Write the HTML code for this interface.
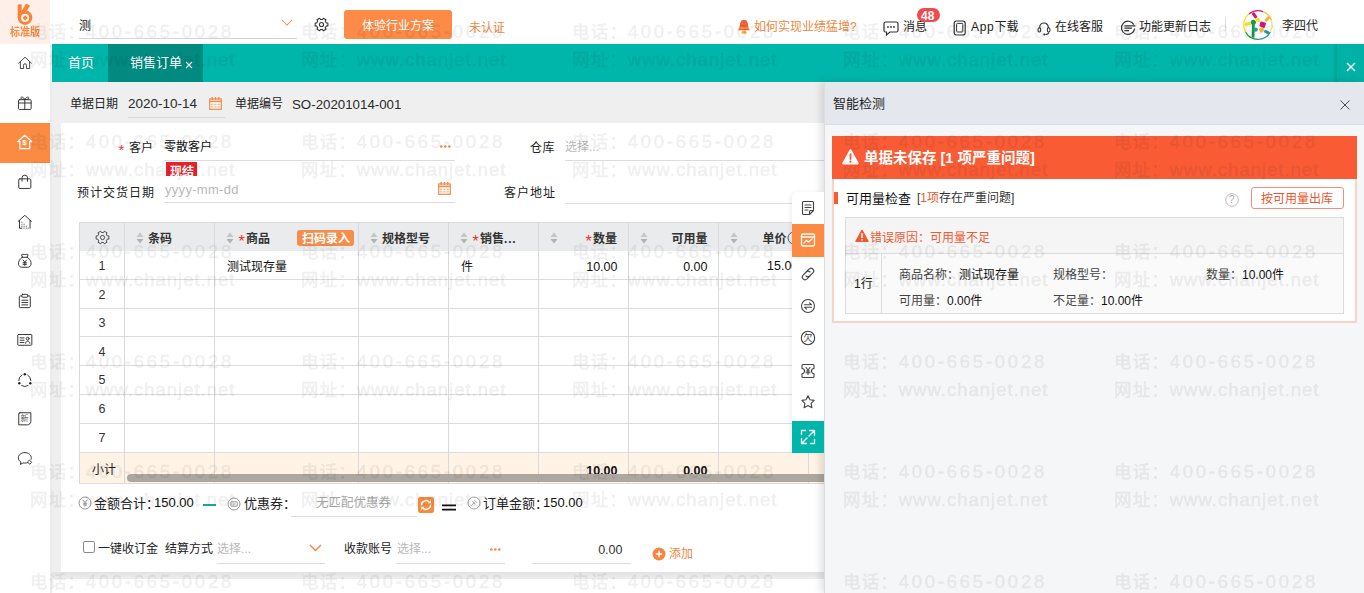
<!DOCTYPE html>
<html lang="zh-CN">
<head>
<meta charset="utf-8">
<title>销售订单</title>
<style>
*{box-sizing:border-box;margin:0;padding:0}
html,body{width:1364px;height:593px;overflow:hidden}
body{position:relative;background:#efefef;font-family:"Liberation Sans","Noto Sans CJK SC",sans-serif;font-size:12px;color:#222;-webkit-font-smoothing:antialiased}
.abs{position:absolute}
.t{position:absolute;white-space:nowrap;line-height:1}
svg{position:absolute;overflow:visible}
.ln{position:absolute;height:1px;background:#dcdcdc}
.ph{color:#b9b9b9}
.or{color:#f5853f}
/* sidebar */
#side{left:0;top:0;width:50px;height:593px;background:#fff}
#sideb{left:50px;top:44px;width:2px;height:549px;background:#ebebeb}
#logo{left:0;top:0;width:50px;height:44px;background:#fef0e8}
#sact{left:0;top:123px;width:50px;height:40px;background:#fb8b42}
/* top */
#top{left:50px;top:0;width:1314px;height:44px;background:#fff}
#tabs{left:52px;top:44px;width:1312px;height:38px;background:#00b5a9}
#tabact{left:56px;top:0;width:95px;height:38px;background:#008a80}
#tabx{left:1285px;top:0;width:27px;height:38px;background:#00b1a5;box-shadow:-2px 0 3px rgba(0,0,0,.12)}
/* form */
#form{left:61px;top:123px;width:770px;height:449px;background:#fff}
#bot{left:52px;top:579px;width:1312px;height:14px;background:#fff}
#botsh{left:52px;top:572px;width:780px;height:7px;background:linear-gradient(#e2e2e2,#ededed)}
/* table */
#th{left:79px;top:222px;width:750px;height:29px;background:#e9ebec}
.vl{position:absolute;width:1px;background:#d9d9d9;top:222px;height:261px}
.hl{position:absolute;height:1px;background:#dcdcdc;left:79px;width:750px}
.hd{font-weight:bold;font-size:12px;color:#333}
.star{color:#f0311f;font-weight:bold}
/* panel */
#panel{left:824px;top:82px;width:540px;height:511px;background:#f5f6f8;box-shadow:-3px 0 8px rgba(0,0,0,.13);border-left:1px solid #dcdde0}
#phead{left:0;top:0;width:540px;height:43px;background:#e4e7ed;border-bottom:1px solid #d9dce2}
#card{left:832px;top:136px;width:525px;height:187px;background:#fff;border:2px solid #fad2c8}
#redbar{left:832px;top:136px;width:525px;height:43px;background:#f95b35}
#itab{left:845px;top:217px;width:499px;height:97px;background:#fafafa;border:1px solid #dcdcdc}
#ihead{left:845px;top:217px;width:499px;height:37px;background:#f5f5f5;border:1px solid #dcdcdc}
/* toolbar */
#tool{left:792px;top:192px;width:32px;height:261px;background:#fff;border-radius:6px 0 0 0;box-shadow:-2px 0 4px rgba(0,0,0,.06)}
/* watermark */
#wm{left:1.6px;top:0;width:1364px;height:597px;pointer-events:none;overflow:hidden;opacity:.06;filter:blur(.6px)}
.w{position:absolute;white-space:nowrap;font-size:17.5px;line-height:20px;color:#000;letter-spacing:1.05px;-webkit-text-stroke:.65px #000}
.w .n{font-size:18.5px;letter-spacing:2.75px}
.w .u{font-size:18.5px;letter-spacing:1px}
</style>
</head>
<body>
<!-- BASE -->
<div id="top" class="abs"></div>
<div id="side" class="abs"></div>
<div id="sideb" class="abs"></div>
<div id="logo" class="abs"></div>
<div id="sact" class="abs"></div>
<div id="tabs" class="abs">
  <div id="tabact" class="abs"></div>
  <div id="tabx" class="abs"></div>
</div>
<div id="form" class="abs"></div>
<div id="botsh" class="abs"></div>
<div id="bot" class="abs"></div>
<!-- TOP -->
<!-- logo -->
<svg style="left:0;top:0" width="50" height="44" viewBox="0 0 50 44"><circle cx="25" cy="17.600" r="7.300" fill="#f9823a"/><rect x="17.700" y="4.200" width="4" height="14" rx="1.300" fill="#f9823a"/><path d="M25.600 4.300 Q26.200 3.700 27 4.100 L29.400 5.300 Q30 5.700 29.600 6.400 L24.400 14.600 L20.800 12.400 Z" fill="#f9823a"/><circle cx="25.100" cy="17.900" r="4.100" fill="#fef0e8"/><path d="M25.100 15.400 L27.600 17.900 L25.100 20.400 L22.600 17.900 Z" fill="#f9823a"/></svg>
<span class="t" style="left:10px;top:27px;font-size:10px;font-weight:bold;color:#f78a45;transform:scaleY(1.08);transform-origin:0 0">标准版</span>
<!-- top bar -->
<span class="t" style="left:79px;top:20px;font-size:12px;color:#222">测</span>
<div class="ln" style="left:79px;top:38px;width:218px;background:#d4d4d4"></div>
<svg style="left:281px;top:19px" width="12" height="8" viewBox="0 0 12 8"><path d="M1 1 L6 6 L11 1" fill="none" stroke="#f28a55" stroke-width="1.050"/></svg>
<svg style="left:313.500px;top:17px" width="15" height="15" viewBox="0 0 16 16"><path d="M14.79 6.31L14.79 9.69L13.14 9.67L12.01 11.61L12.86 13.04L9.93 14.73L9.12 13.28L6.88 13.28L6.07 14.73L3.14 13.04L3.99 11.61L2.86 9.67L1.21 9.69L1.21 6.31L2.86 6.33L3.99 4.39L3.14 2.96L6.07 1.27L6.88 2.72L9.12 2.72L9.93 1.27L12.86 2.96L12.01 4.39L13.14 6.33Z" fill="none" stroke="#333" stroke-width="1.1" stroke-linejoin="round"/><circle cx="8" cy="8" r="2.200" fill="none" stroke="#333" stroke-width="1.1"/></svg>
<div class="abs" style="left:344px;top:10px;width:108px;height:29px;background:#fb8b46;border-radius:3px"></div>
<span class="t" style="left:362px;top:20px;font-size:12px;color:#fff">体验行业方案</span>
<span class="t" style="left:469px;top:22px;font-size:12px;color:#ee8a45">未认证</span>
<!-- bell -->
<svg style="left:737px;top:19px" width="14" height="16" viewBox="0 0 14 16"><path d="M7 .8 C3.600 .8 3 4.500 2.800 7.200 C2.600 9.400 1.500 10.600 .9 11.200 L13.100 11.200 C12.500 10.600 11.400 9.400 11.200 7.200 C11 4.500 10.400 .8 7 .8Z" fill="#f2613a"/><path d="M2.300 8.300h9.400l.3 1.500H2z" fill="#f9a03c"/><ellipse cx="7" cy="13.300" rx="2.500" ry="1.700" fill="#fbb03b"/></svg>
<span class="t" style="left:754px;top:21px;font-size:12px;color:#ee8a45">如何实现业绩猛增?</span>
<svg style="left:883px;top:21px" width="16" height="15" viewBox="0 0 16 15"><path d="M2.500 1h11a1.500 1.500 0 0 1 1.500 1.500v7a1.500 1.500 0 0 1-1.500 1.500H7l-3.500 3v-3h-1A1.500 1.500 0 0 1 1 9.500v-7A1.500 1.500 0 0 1 2.500 1z" fill="none" stroke="#333" stroke-width="1.2"/><circle cx="5" cy="6" r=".9" fill="#333"/><circle cx="8" cy="6" r=".9" fill="#333"/><circle cx="11" cy="6" r=".9" fill="#333"/></svg>
<span class="t" style="left:903px;top:21px;font-size:12px;color:#222">消息</span>
<div class="abs" style="left:917px;top:8px;width:23px;height:14px;border-radius:7px;background:#f0494e"></div>
<span class="t" style="left:921px;top:9.500px;font-size:12px;font-weight:bold;color:#fff">48</span>
<svg style="left:953px;top:20px" width="14" height="16" viewBox="0 0 14 16"><rect x="1.200" y="1" width="11" height="14" rx="2.200" fill="none" stroke="#333" stroke-width="1.200"/><rect x="3.600" y="3.400" width="6.200" height="8.600" rx=".8" fill="none" stroke="#333" stroke-width="1"/></svg>
<span class="t" style="left:971px;top:21px;font-size:12px;color:#222"><span style="letter-spacing:.7px">App</span>下载</span>
<svg style="left:1037px;top:20.500px" width="14" height="15" viewBox="0 0 14 15"><path d="M2.700 7.200V6.300a4.300 4.300 0 0 1 8.600 0v.9" fill="none" stroke="#333" stroke-width="1.150"/><rect x="1.100" y="6.800" width="2.500" height="4.200" rx="1.200" fill="none" stroke="#333" stroke-width="1.050"/><rect x="10.400" y="6.800" width="2.500" height="4.200" rx="1.200" fill="none" stroke="#333" stroke-width="1.050"/><path d="M11.700 11.200c0 1.600-1.500 2.300-3.300 2.300" fill="none" stroke="#333" stroke-width="1.050"/><circle cx="7.300" cy="13.500" r="1.050" fill="#333"/></svg>
<span class="t" style="left:1055px;top:21px;font-size:12px;color:#222">在线客服</span>
<svg style="left:1120px;top:20px" width="16" height="16" viewBox="0 0 16 16"><path d="M13.800 4.600A6.600 6.600 0 1 0 14.600 8.600" fill="none" stroke="#333" stroke-width="1.200"/><path d="M4.400 5.800h11M4.400 8.200h7.600M4.400 10.600h4.600" stroke="#333" stroke-width="1.200" fill="none"/></svg>
<span class="t" style="left:1139px;top:21px;font-size:12px;color:#222">功能更新日志</span>
<div class="abs" style="left:1225px;top:17px;width:1px;height:14px;background:#ddd"></div>
<!-- avatar -->
<svg style="left:1243px;top:10.200px" width="30" height="30" viewBox="0 0 30 30"><circle cx="15" cy="15" r="14.300" fill="#fff"/>
<path d="M5.900 4A14.300 14.300 0 0 1 20 1.600" fill="none" stroke="#d6127c" stroke-width="1.200"/>
<path d="M20 1.600A14.300 14.300 0 0 1 28.600 10.500" fill="none" stroke="#f2c230" stroke-width="1.200"/>
<path d="M28.600 10.500A14.300 14.300 0 0 1 27.400 22.100" fill="none" stroke="#e8d84a" stroke-width="1"/>
<path d="M27.400 22.100A14.300 14.300 0 0 1 15 29.300" fill="none" stroke="#2f9c96" stroke-width="1.200"/>
<path d="M15 29.300A14.300 14.300 0 0 1 2.600 22.100" fill="none" stroke="#159a4a" stroke-width="1.200"/>
<path d="M2.600 22.100A14.300 14.300 0 0 1 5.900 4" fill="none" stroke="#f5e21a" stroke-width="1.200"/>
<path d="M9.800 2.800L13.300 7.800" stroke="#d6127c" stroke-width="3" fill="none"/>
<path d="M26.300 7L22.300 11" stroke="#f2b632" stroke-width="3" fill="none"/>
<path d="M1.800 14.200L8 13.300" stroke="#f5e21a" stroke-width="3" fill="none"/>
<path d="M10.400 13L10.100 27.600" stroke="#159a4a" stroke-width="2.800" fill="none"/>
<path d="M21.300 20.800L26.400 23.600" stroke="#2f9c96" stroke-width="2.800" fill="none"/>
<circle cx="14.900" cy="10" r="2.300" fill="#f5e21a"/>
<circle cx="10.400" cy="12.200" r="2.500" fill="#159a4a"/>
<path d="M18 12l4.600 1.400-1.600 4.200-4-1.800z" fill="#d6127c" stroke="#d6127c" stroke-width="1.200" stroke-linejoin="round"/>
<circle cx="12.600" cy="19.600" r="2.200" fill="#2f9c96"/>
<path d="M16.400 19l3.200-1.400 1.200 3-3.200 1.600z" fill="#f2b632" stroke="#f2b632" stroke-width="1" stroke-linejoin="round"/>
</svg>
<span class="t" style="left:1282px;top:20px;font-size:12px;color:#222">李四代</span>
<!-- tabs -->
<span class="t" style="left:68px;top:56px;font-size:13px;color:#fff">首页</span>
<span class="t" style="left:130px;top:56px;font-size:13px;color:#fff">销售订单</span>
<svg style="left:185px;top:61px" width="8" height="8" viewBox="0 0 8 8"><path d="M1 1L7 7M7 1L1 7" stroke="#fff" stroke-width="1.100"/></svg>
<svg style="left:1346px;top:62px" width="10" height="10" viewBox="0 0 10 10"><path d="M1 1L9 9M9 1L1 9" stroke="#fff" stroke-width="1.300"/></svg>
<!-- doc header -->
<span class="t" style="left:70px;top:98px;font-size:12px;color:#222">单据日期</span>
<span class="t" style="left:128px;top:97px;font-size:13.5px;color:#2a2a2a">2020-10-14</span>
<div class="ln" style="left:128px;top:117px;width:97px;background:#d8d8d8"></div>
<svg class="cal" style="left:208px;top:96px" width="15" height="15" viewBox="0 0 15 15"><rect x="1.700" y="3" width="11.600" height="10.300" fill="#fffaf5" stroke="#f28b4c" stroke-width="1.200"/><path d="M1.700 5.400h11.600" stroke="#f28b4c" stroke-width="1.500" fill="none"/><path d="M4.200 .9v2.800M7.500 .9v2.800M10.800 .9v2.800" stroke="#f28b4c" stroke-width="1.500" fill="none"/><path d="M3 8.300h9M3 10.800h9" stroke="#f4a877" stroke-width="1" fill="none" stroke-dasharray="2.300 1"/></svg>
<span class="t" style="left:235px;top:98px;font-size:12px;color:#222">单据编号</span>
<span class="t" style="left:292px;top:98px;font-size:13.300px;color:#2a2a2a">SO-20201014-001</span>
<!-- /TOP -->
<!-- FORM -->
<span class="t star" style="left:118.500px;top:142px;font-size:15px;font-weight:normal">*</span>
<span class="t" style="left:129px;top:142px;font-size:12px">客户</span>
<span class="t" style="left:164px;top:141px;font-size:12px;color:#111">零散客户</span>
<div class="ln" style="left:164px;top:160px;width:291px"></div>
<svg style="left:440px;top:145px" width="11" height="3" viewBox="0 0 11 3"><circle cx="1.300" cy="1.500" r="1.300" fill="#f5853f"/><circle cx="5.300" cy="1.500" r="1.300" fill="#f5853f"/><circle cx="9.300" cy="1.500" r="1.300" fill="#f5853f"/></svg>
<div class="abs" style="left:166px;top:162px;width:31px;height:14px;background:#e8212b;overflow:hidden"><span class="t" style="left:4px;top:4px;font-size:12px;font-weight:bold;color:#fff">现结</span></div>
<span class="t" style="left:77px;top:187px;font-size:12px;letter-spacing:1px">预计交货日期</span>
<span class="t ph" style="left:165px;top:183px;font-size:13px;letter-spacing:.3px">yyyy-mm-dd</span>
<div class="ln" style="left:164px;top:202px;width:291px"></div>
<svg style="left:437px;top:181px" width="15" height="15" viewBox="0 0 15 15"><rect x="1.700" y="3" width="11.600" height="10.300" fill="#fffaf5" stroke="#f28b4c" stroke-width="1.200"/><path d="M1.700 5.400h11.600" stroke="#f28b4c" stroke-width="1.500" fill="none"/><path d="M4.200 .9v2.800M7.500 .9v2.800M10.800 .9v2.800" stroke="#f28b4c" stroke-width="1.500" fill="none"/><path d="M3 8.300h9M3 10.800h9" stroke="#f4a877" stroke-width="1" fill="none" stroke-dasharray="2.300 1"/></svg>
<span class="t" style="left:530px;top:142px;font-size:12px;letter-spacing:.5px">仓库</span>
<span class="t ph" style="left:565px;top:141px;font-size:12px">选择...</span>
<div class="ln" style="left:565px;top:160px;width:270px"></div>
<span class="t" style="left:504px;top:187px;font-size:12px;letter-spacing:1px">客户地址</span>
<div class="ln" style="left:565px;top:203px;width:270px"></div>
<div id="th" class="abs"></div>
<div class="abs" style="left:79px;top:452px;width:750px;height:31px;background:#fef3e5"></div>
<div class="hl" style="top:222px"></div>

<div class="hl" style="top:279px"></div>
<div class="hl" style="top:308px"></div>
<div class="hl" style="top:336px"></div>
<div class="hl" style="top:365px"></div>
<div class="hl" style="top:394px"></div>
<div class="hl" style="top:423px"></div>
<div class="hl" style="top:452px"></div>
<div class="hl" style="top:483px"></div>
<div class="vl" style="left:79px"></div>
<div class="vl" style="left:124px"></div>
<div class="vl" style="left:214px"></div>
<div class="vl" style="left:358px"></div>
<div class="vl" style="left:448px"></div>
<div class="vl" style="left:538px"></div>
<div class="vl" style="left:628px"></div>
<div class="vl" style="left:718px"></div>
<div class="vl" style="left:808px"></div>
<svg style="left:94.500px;top:229.500px" width="15" height="15" viewBox="0 0 16 16"><path d="M14.79 6.31L14.79 9.69L13.14 9.67L12.01 11.61L12.86 13.04L9.93 14.73L9.12 13.28L6.88 13.28L6.07 14.73L3.14 13.04L3.99 11.61L2.86 9.67L1.21 9.69L1.21 6.31L2.86 6.33L3.99 4.39L3.14 2.96L6.07 1.27L6.88 2.72L9.12 2.72L9.93 1.27L12.86 2.96L12.01 4.39L13.14 6.33Z" fill="none" stroke="#444" stroke-width="1" stroke-linejoin="round"/><circle cx="8" cy="8" r="2.200" fill="none" stroke="#444" stroke-width="1"/></svg>
<svg style="left:135.5px;top:232px" width="8" height="13" viewBox="0 0 8 13"><path d="M4 .3L7.500 4.900H.5Z" fill="#c6c6c6"/><path d="M4 11.600L7.500 7H.5Z" fill="#b2b2b2"/></svg>
<svg style="left:225.5px;top:232px" width="8" height="13" viewBox="0 0 8 13"><path d="M4 .3L7.500 4.900H.5Z" fill="#c6c6c6"/><path d="M4 11.600L7.500 7H.5Z" fill="#b2b2b2"/></svg>
<svg style="left:369.5px;top:232px" width="8" height="13" viewBox="0 0 8 13"><path d="M4 .3L7.500 4.900H.5Z" fill="#c6c6c6"/><path d="M4 11.600L7.500 7H.5Z" fill="#b2b2b2"/></svg>
<svg style="left:459.5px;top:232px" width="8" height="13" viewBox="0 0 8 13"><path d="M4 .3L7.500 4.900H.5Z" fill="#c6c6c6"/><path d="M4 11.600L7.500 7H.5Z" fill="#b2b2b2"/></svg>
<svg style="left:549.5px;top:232px" width="8" height="13" viewBox="0 0 8 13"><path d="M4 .3L7.500 4.900H.5Z" fill="#c6c6c6"/><path d="M4 11.600L7.500 7H.5Z" fill="#b2b2b2"/></svg>
<svg style="left:639.5px;top:232px" width="8" height="13" viewBox="0 0 8 13"><path d="M4 .3L7.500 4.900H.5Z" fill="#c6c6c6"/><path d="M4 11.600L7.500 7H.5Z" fill="#b2b2b2"/></svg>
<svg style="left:729.5px;top:232px" width="8" height="13" viewBox="0 0 8 13"><path d="M4 .3L7.500 4.900H.5Z" fill="#c6c6c6"/><path d="M4 11.600L7.500 7H.5Z" fill="#b2b2b2"/></svg>
<span class="t hd" style="left:148px;top:233px">条码</span>
<span class="t star" style="left:238.5px;top:234px;font-size:16px;font-weight:normal">*</span>
<span class="t hd" style="left:246px;top:233px">商品</span>
<div class="abs" style="left:297px;top:230px;width:57px;height:16px;background:#f68d4a;border-radius:3px"></div>
<span class="t" style="left:302px;top:232.500px;font-size:12px;font-weight:bold;color:#fff">扫码录入</span>
<span class="t hd" style="left:382px;top:233px">规格型号</span>
<span class="t star" style="left:472.5px;top:234px;font-size:16px;font-weight:normal">*</span>
<span class="t hd" style="left:480px;top:233px">销售<span style="letter-spacing:.8px">...</span></span>
<span class="t star" style="left:585.5px;top:234px;font-size:16px;font-weight:normal">*</span>
<span class="t hd" style="left:593px;top:233px">数量</span>
<span class="t hd" style="right:656.5px;top:233px">可用量</span>
<span class="t hd" style="left:762.5px;top:233px">单价</span>
<svg style="left:787px;top:231px" width="14" height="14" viewBox="0 0 14 14"><circle cx="7" cy="7" r="6" fill="none" stroke="#555" stroke-width="1"/></svg>
<span class="t" style="left:92px;width:20px;text-align:center;top:260.0px;font-size:12.500px;color:#333">1</span>
<span class="t" style="left:92px;width:20px;text-align:center;top:288.5px;font-size:12.500px;color:#333">2</span>
<span class="t" style="left:92px;width:20px;text-align:center;top:317.0px;font-size:12.500px;color:#333">3</span>
<span class="t" style="left:92px;width:20px;text-align:center;top:345.5px;font-size:12.500px;color:#333">4</span>
<span class="t" style="left:92px;width:20px;text-align:center;top:374.0px;font-size:12.500px;color:#333">5</span>
<span class="t" style="left:92px;width:20px;text-align:center;top:403.0px;font-size:12.500px;color:#333">6</span>
<span class="t" style="left:92px;width:20px;text-align:center;top:431.5px;font-size:12.500px;color:#333">7</span>
<span class="t" style="left:227px;top:261px;font-size:12px;color:#111">测试现存量</span>
<span class="t" style="left:461px;top:261px;font-size:12px;color:#111">件</span>
<span class="t" style="right:746.5px;top:261px;font-size:12.500px;color:#111">10.00</span>
<span class="t" style="right:656.5px;top:261px;font-size:12.500px;color:#111">0.00</span>
<span class="t" style="left:767px;top:260px;font-size:12.500px;color:#111">15.00</span>
<span class="t" style="left:92px;top:464px;font-size:12px;color:#222">小计</span>
<span class="t" style="right:746.5px;top:465px;font-size:12.500px;font-weight:bold;color:#111">10.00</span>
<span class="t" style="right:656.5px;top:465px;font-size:12.500px;font-weight:bold;color:#111">0.00</span>
<div class="abs" style="left:127px;top:474px;width:720px;height:8px;border-radius:4px;background:#aca79f"></div>
<svg style="left:78px;top:496px" width="14" height="14" viewBox="0 0 14 14"><circle cx="7" cy="7" r="6" fill="none" stroke="#888" stroke-width=".9"/><path d="M4.800 3.800L7 6.600 9.200 3.800M7 6.600V10.600M5 7.300H9M5 8.900H9" fill="none" stroke="#888" stroke-width=".9"/></svg>
<span class="t" style="left:94px;top:497px;font-size:13px;color:#222">金额合计：</span>
<span class="t" style="left:154px;top:496px;font-size:13px;color:#111">150.00</span>
<div class="abs" style="left:203px;top:504px;width:13px;height:2px;background:#12aaa0"></div>
<svg style="left:227px;top:497px" width="14" height="14" viewBox="0 0 14 14"><circle cx="7" cy="7" r="6" fill="none" stroke="#888" stroke-width=".9"/><rect x="3.800" y="4.800" width="6.400" height="4.400" rx=".8" fill="none" stroke="#888" stroke-width=".9"/><path d="M5.600 7h2.800" stroke="#888" stroke-width=".9"/></svg>
<span class="t" style="left:244px;top:497px;font-size:13px;color:#222">优惠券：</span>
<span class="t" style="left:316px;top:497px;font-size:12.500px;color:#aaa">无匹配优惠券</span>
<div class="ln" style="left:291px;top:516px;width:126px"></div>
<svg style="left:418px;top:497px" width="16" height="16" viewBox="0 0 16 16"><rect width="16" height="16" rx="2.500" fill="#f68a3d"/><path d="M3.600 8.400A4.400 4.400 0 0 1 11.400 5.200" fill="none" stroke="#fff" stroke-width="1.600"/><path d="M12.400 7.600A4.400 4.400 0 0 1 4.600 10.800" fill="none" stroke="#fff" stroke-width="1.600"/><path d="M9.600 6.200h3.200V3z" fill="#fff"/><path d="M6.400 9.800H3.200V13z" fill="#fff"/></svg>
<svg style="left:442px;top:500px" width="14" height="14" viewBox="0 0 14 14"><path d="M0 5.300h14M0 9.600h14" stroke="#111" stroke-width="1.700"/></svg>

<svg style="left:467px;top:496px" width="14" height="14" viewBox="0 0 14 14"><circle cx="7" cy="7" r="6" fill="none" stroke="#999" stroke-width=".9"/><path d="M4 9.800L7.400 6.400M5.400 5.200L8.600 8.400M7.400 4.200l2.400 2.400" fill="none" stroke="#999" stroke-width="1"/></svg>
<span class="t" style="left:483px;top:497px;font-size:13px;color:#222">订单金额：</span>
<span class="t" style="left:543px;top:496px;font-size:13px;color:#111">150.00</span>
<div class="abs" style="left:83px;top:541px;width:12px;height:12px;border:1px solid #8a8a8a;border-radius:2px;background:#fff"></div>
<span class="t" style="left:98px;top:543px;font-size:12px;color:#222">一键收订金</span>
<span class="t" style="left:165px;top:543px;font-size:12px;color:#222">结算方式</span>
<span class="t ph" style="left:217px;top:543px;font-size:12px">选择...</span>
<svg style="left:309px;top:544px" width="13" height="8" viewBox="0 0 13 8"><path d="M1 1L6.500 6.500 12 1" fill="none" stroke="#f5853f" stroke-width="1.300"/></svg>
<div class="ln" style="left:217px;top:563px;width:108px"></div>
<span class="t" style="left:344px;top:543px;font-size:12px;color:#222">收款账号</span>
<span class="t ph" style="left:397px;top:543px;font-size:12px">选择...</span>
<svg style="left:490px;top:548px" width="11" height="3" viewBox="0 0 11 3"><circle cx="1.300" cy="1.500" r="1.300" fill="#f5853f"/><circle cx="5.300" cy="1.500" r="1.300" fill="#f5853f"/><circle cx="9.300" cy="1.500" r="1.300" fill="#f5853f"/></svg>
<div class="ln" style="left:396px;top:563px;width:109px"></div>
<span class="t" style="right:741.5px;top:544px;font-size:12.500px;color:#333">0.00</span>
<div class="ln" style="left:532px;top:563px;width:99px"></div>
<svg style="left:652px;top:547px" width="14" height="14" viewBox="0 0 14 14"><circle cx="7" cy="7" r="6.500" fill="#f5853f"/><path d="M7 3.800v6.400M3.800 7h6.400" stroke="#fff" stroke-width="1.400"/></svg>
<span class="t" style="left:669px;top:548px;font-size:12px;color:#f5853f">添加</span>
<!-- /FORM -->
<!-- SIDE -->
<svg style="left:17.0px;top:55.0px" width="16" height="16" viewBox="0 0 18 18"><path d="M1.800 9.200L9 2.500l7.200 6.700" stroke="#333" stroke-width="1" fill="none" stroke-linecap="round" stroke-linejoin="round"/><path d="M3.800 8v7.200h3.600v-3.800a1.600 1.600 0 0 1 3.200 0v3.800h3.600V8" stroke="#333" stroke-width="1" fill="none" stroke-linecap="round" stroke-linejoin="round"/></svg>
<svg style="left:16.2px;top:93.8px" width="17.6" height="17.6" viewBox="0 0 18 18"><rect x="2.500" y="5.800" width="13" height="10" rx="1" stroke="#333" stroke-width="1" fill="none" stroke-linecap="round" stroke-linejoin="round"/><path d="M2.500 9.200h13M9 5.800v10" stroke="#333" stroke-width="1" fill="none" stroke-linecap="round" stroke-linejoin="round"/><path d="M9 5.600C7.500 2.200 4.200 2.800 5 4.600 5.600 5.800 9 5.600 9 5.600zM9 5.600c1.500-3.400 4.800-2.800 4-1-.6 1.200-4 1-4 1z" stroke="#333" stroke-width="1" fill="none" stroke-linecap="round" stroke-linejoin="round"/></svg>
<svg style="left:16.2px;top:133.8px" width="17.6" height="17.6" viewBox="0 0 18 18"><path d="M9 1.200L1.800 7.800h2.200v7.200h10V7.800h2.200z" stroke="#fff" stroke-width="1.300" fill="none" stroke-linecap="round" stroke-linejoin="round" stroke-width="1.500"/></svg>
<span class="t" style="left:22.300px;top:138.500px;font-size:8px;font-weight:bold;color:#fff">$</span>
<svg style="left:16.2px;top:173.2px" width="17.6" height="17.6" viewBox="0 0 18 18"><rect x="2.800" y="6" width="12.400" height="9.800" rx="1.200" stroke="#333" stroke-width="1" fill="none" stroke-linecap="round" stroke-linejoin="round"/><path d="M6.200 8.400V5a2.800 2.800 0 0 1 5.600 0v3.400" stroke="#333" stroke-width="1" fill="none" stroke-linecap="round" stroke-linejoin="round"/></svg>
<svg style="left:16.2px;top:212.7px" width="17.6" height="17.6" viewBox="0 0 18 18"><path d="M2.200 8.600L9 2.400l6.800 6.200" stroke="#333" stroke-width="1" fill="none" stroke-linecap="round" stroke-linejoin="round"/><path d="M3.600 7.600v8h2M14.400 7.600v8" stroke="#333" stroke-width="1" fill="none" stroke-linecap="round" stroke-linejoin="round"/><path d="M6 9.400h.1M6 11.500h.1M8.200 11.500h.1M6 13.600h.1M8.200 13.600h.1M10.400 13.600h.1M6 15.500h.1M8.200 15.500h.1M10.400 15.500h.1M12.400 15.500h.1" stroke="#333" stroke-width="1" fill="none" stroke-linecap="round" stroke-linejoin="round" stroke-width="1.400"/></svg>
<svg style="left:16.2px;top:252.2px" width="17.6" height="17.6" viewBox="0 0 18 18"><path d="M6.400 5.400C3.600 7.200 2.200 10 2.600 12.600c.3 2 1.800 3 3.400 3h6c1.600 0 3.100-1 3.400-3 .4-2.600-1-5.400-3.800-7.200" stroke="#333" stroke-width="1" fill="none" stroke-linecap="round" stroke-linejoin="round"/><path d="M6.200 5.400h5.600M6.600 5.200L5.600 2.800c1-.8 2.200-.2 3.400-.2s2.400-.6 3.400.2l-1 2.400" stroke="#333" stroke-width="1" fill="none" stroke-linecap="round" stroke-linejoin="round"/><path d="M7.200 8.200L9 10.400l1.800-2.200M9 10.400v3.400M7.200 11h3.600M7.200 12.600h3.600" stroke="#333" stroke-width="1" fill="none" stroke-linecap="round" stroke-linejoin="round" stroke-width="1"/></svg>
<svg style="left:16.2px;top:291.7px" width="17.6" height="17.6" viewBox="0 0 18 18"><path d="M6 4H4.400a1 1 0 0 0-1 1v10a1 1 0 0 0 1 1h9.200a1 1 0 0 0 1-1V5a1 1 0 0 0-1-1H12" stroke="#333" stroke-width="1" fill="none" stroke-linecap="round" stroke-linejoin="round"/><rect x="6" y="2.400" width="6" height="3" rx=".8" stroke="#333" stroke-width="1" fill="none" stroke-linecap="round" stroke-linejoin="round"/><path d="M6 8.400h6M6 10.800h6M6 13.200h6" stroke="#333" stroke-width="1" fill="none" stroke-linecap="round" stroke-linejoin="round"/></svg>
<svg style="left:16.2px;top:331.2px" width="17.6" height="17.6" viewBox="0 0 18 18"><rect x="1.800" y="3.600" width="14.400" height="11" rx=".8" stroke="#333" stroke-width="1" fill="none" stroke-linecap="round" stroke-linejoin="round"/><path d="M4.200 7h4M4.200 9.400h4M4.200 11.800h4" stroke="#333" stroke-width="1" fill="none" stroke-linecap="round" stroke-linejoin="round"/><circle cx="12" cy="7.800" r="1.500" stroke="#333" stroke-width="1" fill="none" stroke-linecap="round" stroke-linejoin="round"/><path d="M9.800 12.600c0-3 4.400-3 4.400 0" stroke="#333" stroke-width="1" fill="none" stroke-linecap="round" stroke-linejoin="round"/></svg>
<svg style="left:16.2px;top:371.2px" width="17.6" height="17.6" viewBox="0 0 18 18"><path d="M11.900 4.100A6.200 6.200 0 0 1 15.200 9.800M12.300 14.900A6.200 6.200 0 0 1 5.700 14.900M2.800 9.800A6.200 6.200 0 0 1 6.100 4.100" stroke="#333" stroke-width="1" fill="none" stroke-linecap="round"/><circle cx="9" cy="3.300" r="1.250" fill="#222"/><circle cx="3.400" cy="12.600" r="1.250" fill="#222"/><circle cx="14.600" cy="12.600" r="1.250" fill="#222"/></svg>
<svg style="left:16.2px;top:410.2px" width="17.6" height="17.6" viewBox="0 0 18 18"><path d="M4 2.800h11.200v8.800c0 2-1.600 3.600-3.600 3.600H2.800V4A1.200 1.200 0 0 1 4 2.800z" stroke="#333" stroke-width="1" fill="none" stroke-linecap="round" stroke-linejoin="round" stroke="#555"/></svg>
<span class="t" style="left:20.500px;top:414.500px;font-size:8px;color:#555">新</span>
<svg style="left:16.2px;top:450.2px" width="17.6" height="17.6" viewBox="0 0 18 18"><path d="M9 2.600c-3.800 0-6.600 2.400-6.600 5.400 0 1.800 1 3.300 2.600 4.300l-.6 2.500 2.800-1.600c.6.100 1.200.2 1.800.2 1 0 2-.2 2.800-.5" stroke="#333" stroke-width="1" fill="none" stroke-linecap="round" stroke-linejoin="round"/><path d="M15.400 9.600c.2-.5.200-1 .2-1.600 0-3-2.800-5.400-6.600-5.400" stroke="#333" stroke-width="1" fill="none" stroke-linecap="round" stroke-linejoin="round"/><path d="M14 10.600l2 2-2 2-2-2z" stroke="#333" stroke-width="1" fill="none" stroke-linecap="round" stroke-linejoin="round" stroke-width="1"/></svg>
<!-- /SIDE -->
<!-- CONTENT -->
<!-- PANEL -->
<div id="panel" class="abs"><div id="phead" class="abs"></div></div>
<span class="t" style="left:833px;top:97px;font-size:13px;color:#222">智能检测</span>
<svg style="left:1340px;top:99.500px" width="10" height="10" viewBox="0 0 10 10"><path d="M.5 .5L9.500 9.500M9.500 .5L.5 9.500" stroke="#444" stroke-width=".95"/></svg>
<div id="card" class="abs"></div>
<div id="redbar" class="abs"></div>
<svg style="left:842px;top:149px" width="17" height="16" viewBox="0 0 17 16"><path d="M8.500 1.200 L15.800 14.400 H1.200 Z" fill="#fff" stroke="#fff" stroke-width="2" stroke-linejoin="round"/><path d="M8.500 5.200V10" stroke="#f95b35" stroke-width="1.800" stroke-linecap="round"/><circle cx="8.500" cy="12.600" r="1.100" fill="#f95b35"/></svg>
<span class="t" style="left:864px;top:151px;font-size:14.500px;font-weight:bold;color:#fff">单据未保存 [1 项严重问题]</span>
<div class="abs" style="left:834px;top:192px;width:4px;height:12px;background:#f95b35"></div>
<span class="t" style="left:846px;top:192px;font-size:13px;color:#111">可用量检查</span>
<span class="t" style="left:917px;top:192px;font-size:12px;color:#333">[<span style="color:#ee5a33">1项</span>存在严重问题]</span>
<svg style="left:1225px;top:193px" width="14" height="14" viewBox="0 0 14 14"><circle cx="7" cy="7" r="6.300" fill="none" stroke="#bbb" stroke-width="1"/></svg>
<span class="t" style="left:1229px;top:195px;font-size:10px;color:#aaa">?</span>
<div class="abs" style="left:1251px;top:187px;width:93px;height:22px;border:1px solid #f0907a;border-radius:3px;background:#fff"></div>
<span class="t" style="left:1261px;top:193px;font-size:12px;color:#e8542f">按可用量出库</span>
<div id="itab" class="abs"></div>
<div id="ihead" class="abs"></div>
<div class="abs" style="left:881px;top:253px;width:1px;height:60px;background:#dcdcdc"></div>
<svg style="left:855px;top:229px" width="14" height="14" viewBox="0 0 14 14"><path d="M7 1.400 L13 12.400 H1 Z" fill="#ee5a33" stroke="#ee5a33" stroke-width="1.400" stroke-linejoin="round"/><path d="M7 4.800V8.600" stroke="#fff" stroke-width="1.500" stroke-linecap="round"/><circle cx="7" cy="10.800" r=".9" fill="#fff"/></svg>
<span class="t" style="left:870px;top:231.500px;font-size:12px;color:#ee5a33">错误原因：可用量不足</span>
<span class="t" style="left:854px;top:278px;font-size:12px;color:#222">1行</span>
<span class="t" style="left:899px;top:269px;font-size:12px;color:#444">商品名称：<span style="color:#111">测试现存量</span></span>
<span class="t" style="left:899px;top:295px;font-size:12px;color:#444">可用量：<span style="color:#111">0.00件</span></span>
<span class="t" style="left:1053px;top:269px;font-size:12px;color:#444">规格型号：</span>
<span class="t" style="left:1053px;top:295px;font-size:12px;color:#444">不足量：<span style="color:#111">10.00件</span></span>
<span class="t" style="left:1206px;top:269px;font-size:12px;color:#444">数量：<span style="color:#111">10.00件</span></span>
<div id="tool" class="abs"></div>
<div class="abs" style="left:792px;top:224px;width:32px;height:33px;background:#fb8b42"></div>
<div class="abs" style="left:792px;top:421px;width:32px;height:32px;background:#00b5a9"></div>
<svg style="left:800px;top:200px" width="16" height="16" viewBox="0 0 16 16"><path d="M3.500 1.500h9a1 1 0 0 1 1 1v8l-4 4h-6a1 1 0 0 1-1-1v-11a1 1 0 0 1 1-1z" stroke="#444" stroke-width="1.100" fill="none" stroke-linecap="round" stroke-linejoin="round"/><path d="M13.500 10.500h-3a1 1 0 0 0-1 1v3" stroke="#444" stroke-width="1.100" fill="none" stroke-linecap="round" stroke-linejoin="round"/><path d="M5 5h6M5 7.500h6M5 10h3" stroke="#444" stroke-width="1.100" fill="none" stroke-linecap="round" stroke-linejoin="round"/></svg>
<svg style="left:800px;top:232px" width="16" height="16" viewBox="0 0 16 16"><rect x="1.500" y="2" width="13" height="12" rx="1.500" stroke="#fff" stroke-width="1.300" fill="none" stroke-linecap="round" stroke-linejoin="round"/><path d="M1.500 5h13" stroke="#fff" stroke-width="1.300" fill="none" stroke-linecap="round" stroke-linejoin="round"/><path d="M4 11l2.500-2.500 2 1.500L12 7" stroke="#fff" stroke-width="1.300" fill="none" stroke-linecap="round" stroke-linejoin="round"/></svg>
<svg style="left:800px;top:266px" width="16" height="16" viewBox="0 0 16 16"><path d="M6.500 9.500l4-4" stroke="#444" stroke-width="1.100" fill="none" stroke-linecap="round" stroke-linejoin="round" opacity="0"/><path d="M7 5.200l2.300-2.300a2.700 2.700 0 0 1 3.800 3.800L9.800 10a2.700 2.700 0 0 1-3.800 0" stroke="#444" stroke-width="1.100" fill="none" stroke-linecap="round" stroke-linejoin="round"/><path d="M9 10.800l-2.300 2.300a2.700 2.700 0 0 1-3.800-3.800L6.200 6a2.700 2.700 0 0 1 3.800 0" stroke="#444" stroke-width="1.100" fill="none" stroke-linecap="round" stroke-linejoin="round"/></svg>
<svg style="left:800px;top:298px" width="16" height="16" viewBox="0 0 16 16"><circle cx="8" cy="8" r="6.500" stroke="#444" stroke-width="1.100" fill="none" stroke-linecap="round" stroke-linejoin="round"/><path d="M4.500 6.800h7l-2-2M11.500 9.200h-7l2 2" stroke="#444" stroke-width="1.100" fill="none" stroke-linecap="round" stroke-linejoin="round"/></svg>
<svg style="left:800px;top:330px" width="16" height="16" viewBox="0 0 16 16"><circle cx="8" cy="8" r="6.700" stroke="#444" stroke-width="1.100" fill="none" stroke-linecap="round" stroke-linejoin="round"/></svg>
<span class="t" style="left:803.500px;top:333.500px;font-size:9px;color:#333">欠</span>
<svg style="left:800px;top:363px" width="16" height="16" viewBox="0 0 16 16"><path d="M2 2.500a1 1 0 0 1 1-1h10a1 1 0 0 1 1 1v3a2.500 2.500 0 0 0 0 5v3a1 1 0 0 1-1 1H3a1 1 0 0 1-1-1v-3a2.500 2.500 0 0 0 0-5z" stroke="#444" stroke-width="1.100" fill="none" stroke-linecap="round" stroke-linejoin="round"/><path d="M6 4.500l2 2.500 2-2.500M8 7v4.500M6 8h4M6 9.800h4" stroke="#444" stroke-width="1.100" fill="none" stroke-linecap="round" stroke-linejoin="round"/></svg>
<svg style="left:800px;top:394px" width="16" height="16" viewBox="0 0 16 16"><path d="M8 1.800l1.900 4 4.300.6-3.100 3 .8 4.300L8 11.600l-3.900 2.100.8-4.300-3.100-3 4.300-.6z" stroke="#444" stroke-width="1.100" fill="none" stroke-linecap="round" stroke-linejoin="round" stroke-width="1.300"/></svg>
<svg style="left:800px;top:429px" width="16" height="16" viewBox="0 0 16 16"><path d="M9.500 1.500h5v5M14.500 1.500l-5.500 5.500M6.500 14.500h-5v-5M1.500 14.500l5.500-5.500" stroke="#fff" stroke-width="1.300" fill="none" stroke-linecap="round" stroke-linejoin="round" stroke-width="1.600"/><path d="M1.500 5.500v-4h4M14.500 10.500v4h-4" stroke="#fff" stroke-width="1.300" fill="none" stroke-linecap="round" stroke-linejoin="round" stroke-width="1.600"/></svg>
<!-- /PANEL -->
<!-- WATERMARK -->
<div id="wm" class="abs">
<span class="w" style="left:28.5px;top:21.5px">电话：<span class="n">400-665-0028</span></span><span class="w" style="left:28.5px;top:50px">网址：<span class="u">www.chanjet.net</span></span>
<span class="w" style="left:299.5px;top:21.5px">电话：<span class="n">400-665-0028</span></span><span class="w" style="left:299.5px;top:50px">网址：<span class="u">www.chanjet.net</span></span>
<span class="w" style="left:570.5px;top:21.5px">电话：<span class="n">400-665-0028</span></span><span class="w" style="left:570.5px;top:50px">网址：<span class="u">www.chanjet.net</span></span>
<span class="w" style="left:841.5px;top:21.5px">电话：<span class="n">400-665-0028</span></span><span class="w" style="left:841.5px;top:50px">网址：<span class="u">www.chanjet.net</span></span>
<span class="w" style="left:1112.5px;top:21.5px">电话：<span class="n">400-665-0028</span></span><span class="w" style="left:1112.5px;top:50px">网址：<span class="u">www.chanjet.net</span></span>
<span class="w" style="left:1383.5px;top:21.5px">电话：<span class="n">400-665-0028</span></span><span class="w" style="left:1383.5px;top:50px">网址：<span class="u">www.chanjet.net</span></span>
<span class="w" style="left:28.5px;top:131.5px">电话：<span class="n">400-665-0028</span></span><span class="w" style="left:28.5px;top:160px">网址：<span class="u">www.chanjet.net</span></span>
<span class="w" style="left:299.5px;top:131.5px">电话：<span class="n">400-665-0028</span></span><span class="w" style="left:299.5px;top:160px">网址：<span class="u">www.chanjet.net</span></span>
<span class="w" style="left:570.5px;top:131.5px">电话：<span class="n">400-665-0028</span></span><span class="w" style="left:570.5px;top:160px">网址：<span class="u">www.chanjet.net</span></span>
<span class="w" style="left:841.5px;top:131.5px">电话：<span class="n">400-665-0028</span></span><span class="w" style="left:841.5px;top:160px">网址：<span class="u">www.chanjet.net</span></span>
<span class="w" style="left:1112.5px;top:131.5px">电话：<span class="n">400-665-0028</span></span><span class="w" style="left:1112.5px;top:160px">网址：<span class="u">www.chanjet.net</span></span>
<span class="w" style="left:1383.5px;top:131.5px">电话：<span class="n">400-665-0028</span></span><span class="w" style="left:1383.5px;top:160px">网址：<span class="u">www.chanjet.net</span></span>
<span class="w" style="left:28.5px;top:241.5px">电话：<span class="n">400-665-0028</span></span><span class="w" style="left:28.5px;top:270px">网址：<span class="u">www.chanjet.net</span></span>
<span class="w" style="left:299.5px;top:241.5px">电话：<span class="n">400-665-0028</span></span><span class="w" style="left:299.5px;top:270px">网址：<span class="u">www.chanjet.net</span></span>
<span class="w" style="left:570.5px;top:241.5px">电话：<span class="n">400-665-0028</span></span><span class="w" style="left:570.5px;top:270px">网址：<span class="u">www.chanjet.net</span></span>
<span class="w" style="left:841.5px;top:241.5px">电话：<span class="n">400-665-0028</span></span><span class="w" style="left:841.5px;top:270px">网址：<span class="u">www.chanjet.net</span></span>
<span class="w" style="left:1112.5px;top:241.5px">电话：<span class="n">400-665-0028</span></span><span class="w" style="left:1112.5px;top:270px">网址：<span class="u">www.chanjet.net</span></span>
<span class="w" style="left:1383.5px;top:241.5px">电话：<span class="n">400-665-0028</span></span><span class="w" style="left:1383.5px;top:270px">网址：<span class="u">www.chanjet.net</span></span>
<span class="w" style="left:28.5px;top:351.5px">电话：<span class="n">400-665-0028</span></span><span class="w" style="left:28.5px;top:380px">网址：<span class="u">www.chanjet.net</span></span>
<span class="w" style="left:299.5px;top:351.5px">电话：<span class="n">400-665-0028</span></span><span class="w" style="left:299.5px;top:380px">网址：<span class="u">www.chanjet.net</span></span>
<span class="w" style="left:570.5px;top:351.5px">电话：<span class="n">400-665-0028</span></span><span class="w" style="left:570.5px;top:380px">网址：<span class="u">www.chanjet.net</span></span>
<span class="w" style="left:841.5px;top:351.5px">电话：<span class="n">400-665-0028</span></span><span class="w" style="left:841.5px;top:380px">网址：<span class="u">www.chanjet.net</span></span>
<span class="w" style="left:1112.5px;top:351.5px">电话：<span class="n">400-665-0028</span></span><span class="w" style="left:1112.5px;top:380px">网址：<span class="u">www.chanjet.net</span></span>
<span class="w" style="left:1383.5px;top:351.5px">电话：<span class="n">400-665-0028</span></span><span class="w" style="left:1383.5px;top:380px">网址：<span class="u">www.chanjet.net</span></span>
<span class="w" style="left:28.5px;top:461.5px">电话：<span class="n">400-665-0028</span></span><span class="w" style="left:28.5px;top:490px">网址：<span class="u">www.chanjet.net</span></span>
<span class="w" style="left:299.5px;top:461.5px">电话：<span class="n">400-665-0028</span></span><span class="w" style="left:299.5px;top:490px">网址：<span class="u">www.chanjet.net</span></span>
<span class="w" style="left:570.5px;top:461.5px">电话：<span class="n">400-665-0028</span></span><span class="w" style="left:570.5px;top:490px">网址：<span class="u">www.chanjet.net</span></span>
<span class="w" style="left:841.5px;top:461.5px">电话：<span class="n">400-665-0028</span></span><span class="w" style="left:841.5px;top:490px">网址：<span class="u">www.chanjet.net</span></span>
<span class="w" style="left:1112.5px;top:461.5px">电话：<span class="n">400-665-0028</span></span><span class="w" style="left:1112.5px;top:490px">网址：<span class="u">www.chanjet.net</span></span>
<span class="w" style="left:1383.5px;top:461.5px">电话：<span class="n">400-665-0028</span></span><span class="w" style="left:1383.5px;top:490px">网址：<span class="u">www.chanjet.net</span></span>
<span class="w" style="left:28.5px;top:571.5px">电话：<span class="n">400-665-0028</span></span><span class="w" style="left:28.5px;top:600px">网址：<span class="u">www.chanjet.net</span></span>
<span class="w" style="left:299.5px;top:571.5px">电话：<span class="n">400-665-0028</span></span><span class="w" style="left:299.5px;top:600px">网址：<span class="u">www.chanjet.net</span></span>
<span class="w" style="left:570.5px;top:571.5px">电话：<span class="n">400-665-0028</span></span><span class="w" style="left:570.5px;top:600px">网址：<span class="u">www.chanjet.net</span></span>
<span class="w" style="left:841.5px;top:571.5px">电话：<span class="n">400-665-0028</span></span><span class="w" style="left:841.5px;top:600px">网址：<span class="u">www.chanjet.net</span></span>
<span class="w" style="left:1112.5px;top:571.5px">电话：<span class="n">400-665-0028</span></span><span class="w" style="left:1112.5px;top:600px">网址：<span class="u">www.chanjet.net</span></span>
<span class="w" style="left:1383.5px;top:571.5px">电话：<span class="n">400-665-0028</span></span><span class="w" style="left:1383.5px;top:600px">网址：<span class="u">www.chanjet.net</span></span>
</div>
</body>
</html>
